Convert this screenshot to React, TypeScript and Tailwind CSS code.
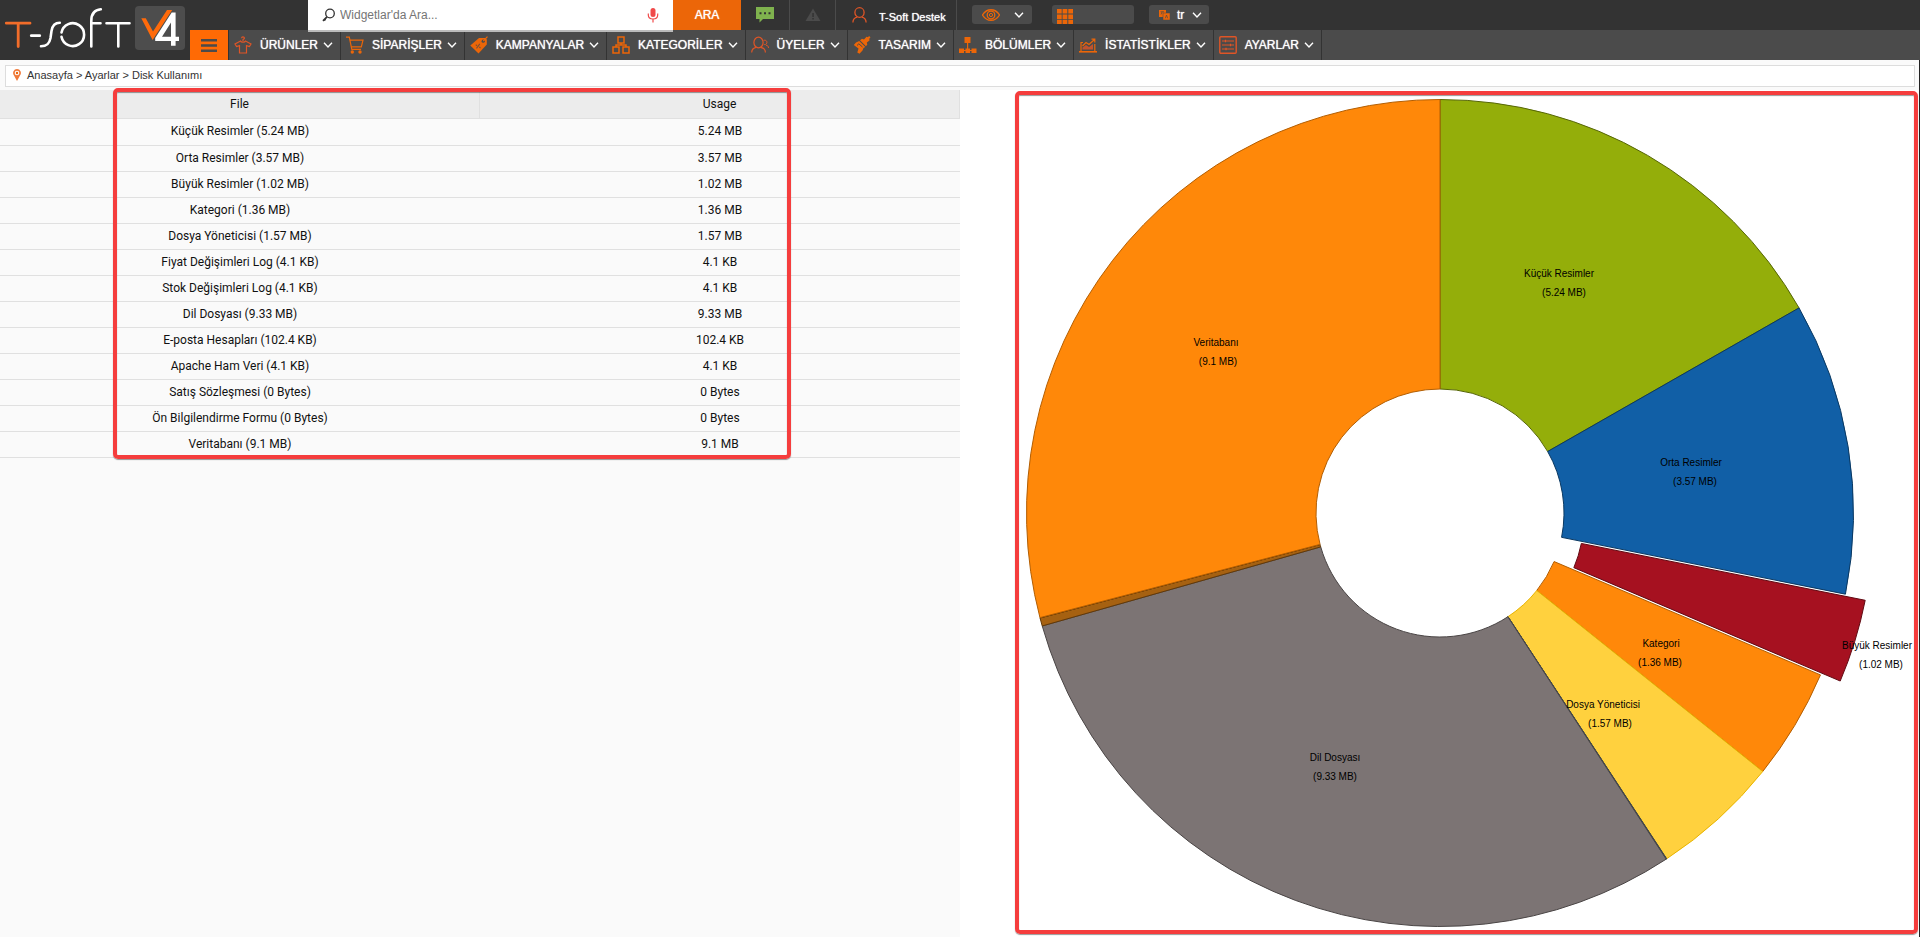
import type { ReactNode } from "react";

const ORANGE = "#ec6608";
const RUST = "#df5526";

function Chevron() {
  return (
    <svg width="10" height="6" viewBox="0 0 10 6" fill="none" stroke="#fff" strokeWidth="1.4" aria-hidden="true">
      <path d="M1 .8 5 4.9 9 .8" />
    </svg>
  );
}

function Logo() {
  return (
    <svg width="190" height="60" viewBox="0 0 190 60" fill="none" role="img" aria-label="T-Soft V4">
      <g strokeWidth="2.600" strokeLinecap="round" stroke="#fff">
        <path d="M6.300 23.200H30M18.200 23.200V46.500" stroke="#f26d2a" strokeWidth="2.800" />
        <path d="M31.300 35.700H39.700" strokeWidth="2.800" />
        <path d="M59.800 22.800C54.500 22.800 52.300 26 51.500 31L50.500 38C49.500 43.500 47.200 46.200 41 46.300" />
        <path d="M61.500 32.500A11.400 11.400 0 1 1 61.500 36.800" />
        <path d="M91.300 46.500V21C91.300 13.500 94.500 9.800 100.800 9.300M91.300 23.200H100.500" />
        <path d="M106.500 23.200H129.500M118.300 23.200V46.500" />
      </g>
      <rect x="135" y="6" width="50" height="44" rx="4" fill="#4d4d4d" />
      <path d="M141.300 18.300H145.800L153 31.500 167 10H172.200L152.600 40Z" fill="#ff6a0a" />
      <path d="M175.600 12.500V36.700H179V41H175.600V45.800H171V41H155.200V38L171.700 12.500ZM171 22.500 162 36.700H171Z" fill="#fff" />
    </svg>
  );
}

function Icon({ children, color = ORANGE }: { children: ReactNode; color?: string }) {
  return (
    <svg width="18" height="18" viewBox="0 0 18 18" fill="none" stroke={color} strokeWidth="1.2" aria-hidden="true">
      {children}
    </svg>
  );
}

const nav: { label: string; icon: ReactNode }[] = [
  {
    label: "ÜRÜNLER",
    icon: (
      <Icon color={RUST}>
        <path d="M9 5V3.300M7.600 2.300C7.600 .4 10.400 .4 10.400 2.200 10.400 3 9 3 9 4M6.500 5 1 8l1.600 2.600 2.900-1V17h7V9.600l2.900 1L17 8l-5.500-3C11 6.500 7 6.500 6.500 5Z" />
      </Icon>
    ),
  },
  {
    label: "SİPARİŞLER",
    icon: (
      <Icon>
        <path d="M0 1.200H3.300L5.800 13.300H15M4.200 4.200H17L15.300 10.800H5.400" />
        <circle cx="6.300" cy="16" r="1.700" fill={ORANGE} stroke="none" />
        <circle cx="14" cy="16" r="1.700" fill={ORANGE} stroke="none" />
      </Icon>
    ),
  },
  {
    label: "KAMPANYALAR",
    icon: (
      <Icon>
        <path d="M.3 9.500 9 2h6.500l1.300 1.500V8.500L8.500 17.500Z" fill={ORANGE} stroke="none" />
        <circle cx="13.200" cy="5.200" r="1.600" fill="#4b4b4b" stroke="none" />
        <path d="M13.200 5.200 17.500 .6" />
        <path d="M6.500 12.300 9.800 7.800M5.800 8.600 7 9.800M9.300 11 10.500 12.200" stroke="#7d4f33" strokeWidth="1.100" />
      </Icon>
    ),
  },
  {
    label: "KATEGORİLER",
    icon: (
      <Icon>
        <path d="M6 1H12V7H6ZM1 11H7V17H1ZM11 11H17V17H11ZM9 7V9M4 11V9H14V11" strokeWidth="1.500" />
      </Icon>
    ),
  },
  {
    label: "ÜYELER",
    icon: (
      <Icon color={RUST}>
        <ellipse cx="7.500" cy="6.500" rx="4.600" ry="5.300" />
        <path d="M.7 16.500C.8 12.800 2.800 11.700 5.300 11.300M9.700 11.300C12.400 11.700 14.300 12.800 14.400 16.500" />
        <path d="M12.600 4.300C17.200 3.300 16.700 9.400 13.200 8.600M15 9.200C16.800 9.600 17.500 10.300 17.500 12" strokeWidth="1" />
      </Icon>
    ),
  },
  {
    label: "TASARIM",
    icon: (
      <Icon>
        <path d="M7 4.200 9 2.800 11 3.500 13.500 .8 15 1.200 16 0 17.500 1.200 16.300 2.800 16.500 4.500 13.800 6.500 14.300 8.500 13 10.300ZM6.200 5 12.300 11 10.500 12 9.500 14.500 6.500 17.800 4.300 16.500 5.500 12.500 .8 9 3 6.500Z" fill={ORANGE} stroke="none" />
        <path d="m4 9.500 1.800-1.700L9.500 11" stroke="#4b4b4b" strokeWidth="1" />
      </Icon>
    ),
  },
  {
    label: "BÖLÜMLER",
    icon: (
      <Icon>
        <path d="M5.500 1H11.500V7H5.500ZM0 12.500H5V17H0ZM6.500 12.500H11V17H6.500ZM12.500 12.500H17.500V17H12.500Z" fill={ORANGE} stroke="none" />
        <path d="M8.600 7V13M2.500 14.500H15" />
      </Icon>
    ),
  },
  {
    label: "İSTATİSTİKLER",
    icon: (
      <Icon>
        <path d="M0 15.800H18" strokeWidth="1.600" />
        <path d="M2 15V6.500H4M15.800 8V15M3.500 10 7 6.500 10 8.500 15.500 3.500M12.500 3.200H15.800V6.500" />
        <path d="M3.500 11.500 7 9 10 11 14 8V13.500H3.500Z" fill={RUST} stroke="none" fillOpacity=".8" />
      </Icon>
    ),
  },
  {
    label: "AYARLAR",
    icon: (
      <Icon color={RUST}>
        <rect x=".8" y=".8" width="16.400" height="16.400" rx="1" strokeWidth="1.400" />
        <path d="M3 5H15M3 9H15M3 13H15M6.500 3.700V6.300M11.500 7.700V10.300M7 11.700V14.300" />
      </Icon>
    ),
  },
];

const rows: [string, string][] = [
  ["Küçük Resimler (5.24 MB)", "5.24 MB"],
  ["Orta Resimler (3.57 MB)", "3.57 MB"],
  ["Büyük Resimler (1.02 MB)", "1.02 MB"],
  ["Kategori (1.36 MB)", "1.36 MB"],
  ["Dosya Yöneticisi (1.57 MB)", "1.57 MB"],
  ["Fiyat Değişimleri Log (4.1 KB)", "4.1 KB"],
  ["Stok Değişimleri Log (4.1 KB)", "4.1 KB"],
  ["Dil Dosyası (9.33 MB)", "9.33 MB"],
  ["E-posta Hesapları (102.4 KB)", "102.4 KB"],
  ["Apache Ham Veri (4.1 KB)", "4.1 KB"],
  ["Satış Sözleşmesi (0 Bytes)", "0 Bytes"],
  ["Ön Bilgilendirme Formu (0 Bytes)", "0 Bytes"],
  ["Veritabanı (9.1 MB)", "9.1 MB"],
];

type Slice = {
  mb: number;
  fill: string;
  stroke: string;
  pulled?: boolean;
  label?: { name: string; size: string; x1: number; x2: number; y: number };
};

const slices: Slice[] = [
  { mb: 5.24, fill: "#94ae0a", stroke: "#566606", label: { name: "Küçük Resimler", size: "(5.24 MB)", x1: 599, x2: 604, y: 187 } },
  { mb: 3.57, fill: "#115fa6", stroke: "#0a3861", label: { name: "Orta Resimler", size: "(3.57 MB)", x1: 731, x2: 735, y: 376 } },
  { mb: 1.02, fill: "#a61120", stroke: "#610a13", pulled: true, label: { name: "Büyük Resimler", size: "(1.02 MB)", x1: 917, x2: 921, y: 559 } },
  { mb: 1.36, fill: "#ff8809", stroke: "#b35e02", label: { name: "Kategori", size: "(1.36 MB)", x1: 701, x2: 700, y: 557 } },
  { mb: 1.57, fill: "#ffd13e", stroke: "#e8b400", label: { name: "Dosya Yöneticisi", size: "(1.57 MB)", x1: 643, x2: 650, y: 618 } },
  { mb: 0.004, fill: "#a61187", stroke: "#3b4a50" },
  { mb: 0.004, fill: "#24ad9a", stroke: "#3b4a50" },
  { mb: 9.33, fill: "#7c7474", stroke: "#4a4545", label: { name: "Dil Dosyası", size: "(9.33 MB)", x1: 375, x2: 375, y: 671 } },
  { mb: 0.1, fill: "#a66111", stroke: "#61390a" },
  { mb: 0.004, fill: "#a66111", stroke: "#61390a" },
  { mb: 9.1, fill: "#ff8809", stroke: "#b35e02", label: { name: "Veritabanı", size: "(9.1 MB)", x1: 256, x2: 258, y: 256 } },
];

const CX = 480;
const CY = 423;
const OUTER = 413.5;
const INNER = 124;

function DonutChart() {
  const total = slices.reduce((sum, s) => sum + s.mb, 0);
  let angle = 0;
  const paths = slices.map((s) => {
    const a = angle;
    const b = a + (s.mb / total) * Math.PI * 2;
    angle = b;
    const mid = (a + b) / 2;
    const shift = s.pulled ? OUTER * 0.05 : 0;
    const ox = CX + Math.sin(mid) * shift;
    const oy = CY - Math.cos(mid) * shift;
    const point = (r: number, t: number) => `${(ox + Math.sin(t) * r).toFixed(2)} ${(oy - Math.cos(t) * r).toFixed(2)}`;
    const large = b - a > Math.PI ? 1 : 0;
    return `M${point(INNER, a)}L${point(OUTER, a)}A${OUTER} ${OUTER} 0 ${large} 1 ${point(OUTER, b)}L${point(INNER, b)}A${INNER} ${INNER} 0 ${large} 0 ${point(INNER, a)}Z`;
  });
  return (
    <svg viewBox="0 0 960 847" className="block h-auto w-full" role="img" aria-label="Disk Kullanımı">
      {slices.map((s, i) => (
        <path key={i} d={paths[i]} fill={s.fill} stroke={s.stroke} strokeWidth="1" />
      ))}
      <g className="font-['Liberation_Sans',Arial,sans-serif] text-[10px]" fill="#000" textAnchor="middle">
        {slices.map((s, i) =>
          s.label ? (
            <g key={i}>
              <text x={s.label.x1} y={s.label.y}>{s.label.name}</text>
              <text x={s.label.x2} y={s.label.y + 19}>{s.label.size}</text>
            </g>
          ) : null,
        )}
      </g>
    </svg>
  );
}

function TopBar() {
  return (
    <div className="flex h-[30px] bg-[#333]">
      <form className="relative z-10 ml-[118px] flex h-8 w-[365px] items-center border-b-2 border-[#bbb] bg-white pr-[14px] pl-[14px]" onSubmit={(e) => e.preventDefault()}>
        <svg width="14" height="14" viewBox="0 0 14 14" fill="none" stroke="#333" aria-hidden="true">
          <circle cx="8" cy="5.500" r="4.300" strokeWidth="1.300" />
          <path d="M5 8.800 1 12.800M2.500 11.300 3.500 12.300" strokeWidth="1.800" />
        </svg>
        <input
          type="text"
          aria-label="Widgetlar'da Ara"
          placeholder="Widgetlar'da Ara..."
          className="ml-1 min-w-0 flex-1 bg-transparent text-xs text-[#333] outline-none placeholder:text-[#757575]"
        />
        <svg width="12" height="16" viewBox="0 0 12 16" fill="none" stroke="#f04a4a" aria-hidden="true">
          <rect x="3.500" y="1" width="5" height="9" rx="2.500" fill="#f04a4a" stroke="none" />
          <path d="M1.300 6.500V8C1.300 13.300 10.700 13.300 10.700 8V6.500M6 12V15.500" strokeWidth="1.200" />
        </svg>
      </form>
      <button type="button" className="w-[68px] bg-[#ec6608] text-xs text-white [text-shadow:0_0_1px_#fff]">ARA</button>
      <button type="button" aria-label="Mesajlar" className="flex w-[49px] items-center justify-center border-r border-[#4b4b4b]">
        <svg width="18" height="16" viewBox="0 0 18 16" aria-hidden="true">
          <path d="M0 0H18V12H7L3.500 15.500V12H0Z" fill="#7fb24e" />
          <path d="M3.500 5.200h2v2h-2zM8 5.200h2v2h-2zM12.500 5.200h2v2h-2z" fill="#333" />
        </svg>
      </button>
      <button type="button" aria-label="Uyarılar" className="flex w-[46px] items-center justify-center border-r border-[#4b4b4b]">
        <svg width="16" height="14" viewBox="0 0 16 14" aria-hidden="true">
          <path d="M8 .5 15.500 13H.5Z" fill="#4b4b4b" />
          <path d="M7.300 5h1.500v4H7.300zM7.300 10h1.500v1.500H7.300z" fill="#333" />
        </svg>
      </button>
      <a href="#destek" className="flex w-[121px] items-center border-r border-[#4b4b4b] pl-4 text-white">
        <svg width="15" height="16" viewBox="0 0 15 16" fill="none" stroke={RUST} strokeWidth="1.300" aria-hidden="true">
          <ellipse cx="7.500" cy="5.500" rx="4.600" ry="4.800" />
          <path d="M.9 15.500C1 12 2.500 10.700 5.200 10.200M9.800 10.200C12.500 10.700 14 12 14.100 15.500" />
        </svg>
        <span className="mt-1 ml-3 text-[11px] whitespace-nowrap [text-shadow:0_0_1px_#fff]">T-Soft Destek</span>
      </a>
      <button type="button" aria-label="Görünüm" className="mt-[5px] ml-[15px] flex h-[19px] w-[60px] items-center justify-between rounded-[3px] bg-[#4b4b4b] pr-2 pl-[10px]">
        <svg width="18" height="12" viewBox="0 0 18 12" fill="none" stroke={ORANGE} aria-hidden="true">
          <path d="M.5 6C5-1 13-1 17.500 6 13 13 5 13 .5 6Z" strokeWidth="1.300" />
          <circle cx="9" cy="6" r="3.800" strokeWidth="1.300" />
          <circle cx="9" cy="6" r="1.600" />
        </svg>
        <Chevron />
      </button>
      <button type="button" aria-label="Uygulamalar" className="mt-[5px] ml-5 flex h-[19px] w-[82px] items-end rounded-[3px] bg-[#4b4b4b] pl-[5px]">
        <svg width="16" height="15" viewBox="0 0 16 15" fill={ORANGE} aria-hidden="true">
          <path d="M0 0h4.700v4.500H0zM5.600 0h4.700v4.500H5.600zM11.300 0H16v4.500h-4.700zM0 5.400h4.700v4.500H0zM5.600 5.400h4.700v4.500H5.600zM11.300 5.400H16v4.500h-4.700zM0 10.800h4.700V15H0zM5.600 10.800h4.700V15H5.600zM11.300 10.800H16V15h-4.700z" />
        </svg>
      </button>
      <button type="button" aria-label="Dil: tr" className="mt-[5px] ml-[15px] flex h-[19px] w-[60px] items-center rounded-[3px] bg-[#4b4b4b] pl-[10px] text-xs text-white">
        <svg width="11" height="10" viewBox="0 0 11 10" aria-hidden="true">
          <path d="M0 0H7V7H0Z" fill={ORANGE} />
          <path d="M4 3H11V10H4Z" fill={ORANGE} stroke="#4b4b4b" strokeWidth=".5" />
          <path d="M1.500 1.800H5M3.200 1.800 2 4.500M6.300 8.300 7.500 5 8.700 8.300" stroke="#4b4b4b" strokeWidth=".7" fill="none" />
        </svg>
        <span className="mr-2 ml-[7px] [text-shadow:0_0_1px_#fff]">tr</span>
        <Chevron />
      </button>
    </div>
  );
}

function NavBar() {
  return (
    <nav className="flex h-[30px] bg-[#4b4b4b]">
      <button type="button" aria-label="Menü" className="flex w-[38px] items-center justify-center bg-[#ff6a05]">
        <svg width="16" height="13" viewBox="0 0 16 13" fill="#4b4b4b" aria-hidden="true">
          <path d="M0 0H16V2.500H0ZM0 5.200H16V7.700H0ZM0 10.500H16V13H0Z" />
        </svg>
      </button>
      <ul className="flex border-l border-[#333]">
        {nav.map((item) => (
          <li key={item.label} className="border-r border-[#333]">
            <a href="#menu" className="flex h-full items-center pr-[7px] pl-[5px] text-white">
              {item.icon}
              <span className="mr-[5px] ml-2 text-xs whitespace-nowrap [text-shadow:0_0_1px_#fff]">{item.label}</span>
              <Chevron />
            </a>
          </li>
        ))}
      </ul>
    </nav>
  );
}

export default function App() {
  return (
    <div className="flex min-h-screen flex-col bg-[#fafafa] font-['Liberation_Sans',Arial,sans-serif] text-xs text-[#111]">
      <header className="flex h-[60px] bg-[#333]">
        <a href="#anasayfa" className="w-[190px] shrink-0"><Logo /></a>
        <div className="min-w-0 flex-1">
          <TopBar />
          <NavBar />
        </div>
      </header>
      <div className="relative flex flex-1 flex-col">
        <div className="px-[5px] pt-[5px] pb-[3px]">
          <div className="flex h-[22px] items-center border border-[#ddd] bg-white pb-[2px] pl-[7px] text-[11px] text-[#333]">
            <svg width="8" height="12" viewBox="0 0 8 12" aria-hidden="true">
              <path d="M4 0A4 4 0 0 1 7 6.500L4 12 1 6.500A4 4 0 0 1 4 0Z" fill="#f07a3a" />
              <circle cx="4" cy="4" r="2.300" fill="#fff" />
              <circle cx="4" cy="4" r="1.200" fill={ORANGE} />
            </svg>
            <span className="ml-[6px]">Anasayfa &gt; Ayarlar &gt; Disk Kullanımı</span>
          </div>
        </div>
        <main className="grid flex-1 grid-cols-2">
          <section className="relative">
            <table className="w-full table-fixed border-separate border-spacing-0 text-center font-['Roboto',sans-serif]">
              <thead>
                <tr className="h-[29px] bg-[#ececec]">
                  <th className="border-r border-b border-[#e0e0e0] p-0 font-normal">File</th>
                  <th className="border-r border-b border-[#e0e0e0] p-0 font-normal">Usage</th>
                </tr>
              </thead>
              <tbody>
                {rows.map(([file, usage]) => (
                  <tr key={file} className="h-[26px] first:h-[27px]">
                    <td className="border-b border-[#e0e0e0] p-0 pb-[2px]">{file}</td>
                    <td className="border-b border-[#e0e0e0] p-0 pb-[2px]">{usage}</td>
                  </tr>
                ))}
              </tbody>
            </table>
            <div className="pointer-events-none absolute -top-[2px] right-[169px] left-[113px] h-[371px] rounded-[5px] border-4 border-[#f53d3d] shadow-[0_1px_1px_rgba(0,0,0,0.4),inset_0_1px_1px_rgba(0,0,0,0.4)]" />
          </section>
          <section className="relative bg-white">
            <DonutChart />
            <div className="pointer-events-none absolute top-[1px] right-[2px] bottom-[3px] left-[55px] rounded-[5px] border-4 border-[#f53d3d] shadow-[0_1px_1px_rgba(0,0,0,0.4),inset_0_1px_1px_rgba(0,0,0,0.4)]" />
          </section>
        </main>
        <div className="absolute inset-y-0 right-0 w-px bg-[#222]" />
      </div>
    </div>
  );
}
